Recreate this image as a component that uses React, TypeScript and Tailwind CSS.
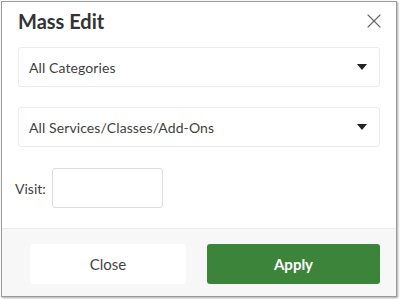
import { X } from 'lucide-react'

const font = { fontFamily: 'Lato, "Open Sans", Arial, sans-serif' }

function Caret() {
  return (
    <svg width="10" height="6" viewBox="0 0 10 6" className="shrink-0">
      <path d="M0 0h10L5 6z" fill="#222" />
    </svg>
  )
}

function SelectBox({ label }: { label: string }) {
  return (
    <div className="flex h-[40px] items-center justify-between rounded-[3px] border border-[#ececec] bg-white pl-[10px] pr-[12px]">
      <span className="text-[14px] tracking-[0.1px] text-[#3f3f3f]">{label}</span>
      <Caret />
    </div>
  )
}

export default function App() {
  return (
    <div className="h-[299px] w-[400px] bg-white pl-[1px] pt-[1px]" style={font}>
      <div className="flex h-[296px] w-[396px] flex-col overflow-hidden border border-[#9a9a9a] bg-white shadow-[1px_1px_2px_rgba(0,0,0,0.35)]">
        {/* Header */}
        <div className="flex items-start justify-between pl-[16px] pr-[10px] pt-[5px]">
          <h2 className="text-[20px] font-bold leading-[28px] text-[#333]">Mass Edit</h2>
          <button className="mt-[2px] text-[#666]">
            <X size={24} strokeWidth={1.1} />
          </button>
        </div>

        {/* Body */}
        <div className="flex flex-1 flex-col px-[16px] pt-[12px]">
          <SelectBox label="All Categories" />
          <div className="mt-[20px]">
            <SelectBox label="All Services/Classes/Add-Ons" />
          </div>
          <div className="mt-[21px] flex items-center gap-[6px]">
            <label className="-ml-[3px] text-[14px] text-[#3f3f3f]">Visit:</label>
            <input className="h-[40px] w-[111px] rounded-[3px] border border-[#dcdcdc] bg-white outline-none" />
          </div>
        </div>

        {/* Footer */}
        <div className="flex h-[68px] gap-[21px] border-t border-[#ececec] bg-[#f7f7f7] pl-[28px] pr-[16px] pt-[15px]">
          <button className="h-[40px] w-[156px] rounded-[3px] bg-white text-[15px] text-[#444]">Close</button>
          <button className="h-[40px] flex-1 rounded-[3px] bg-[#3d843b] text-[15px] font-bold text-white">
            Apply
          </button>
        </div>
      </div>
    </div>
  )
}
